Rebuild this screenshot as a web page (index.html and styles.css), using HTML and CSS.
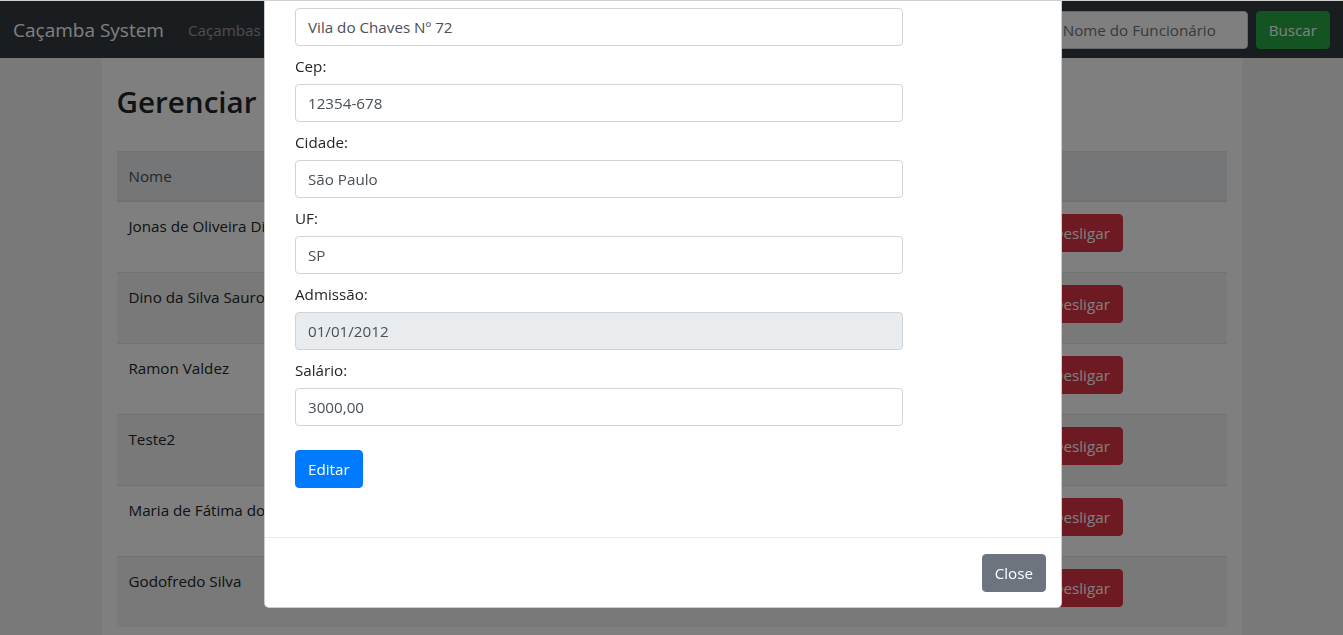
FILE: index.html
```html
<!DOCTYPE html>
<html lang="pt-BR">
<head>
<meta charset="utf-8">
<title>Caçamba System</title>
<link rel="stylesheet" href="styles.css">
</head>
<body>
<div class="topline"></div>
<nav class="navbar">
  <a class="brand" href="#">Caçamba System</a>
  <ul class="nav">
    <li><a href="#">Caçambas</a></li>
    <li><a href="#">Clientes</a></li>
    <li><a href="#">Funcionários</a></li>
  </ul>
  <form class="search">
    <input class="search-input" type="text" placeholder="Nome do Funcionário">
    <button class="btn btn-success" type="button">Buscar</button>
  </form>
</nav>

<main class="container">
  <h2 class="title">Gerenciar Funcionários</h2>
  <table class="table">
    <colgroup>
      <col class="c-nome"><col class="c-cpf"><col class="c-cargo"><col class="c-acoes"><col class="c-extra">
    </colgroup>
    <thead>
      <tr><th>Nome</th><th>CPF</th><th>Cargo</th><th></th><th></th></tr>
    </thead>
    <tbody>
      <tr><td>Jonas de Oliveira Dias</td><td>123.456.789-00</td><td>Motorista</td><td class="actions"><button class="btn btn-danger">Desligar</button></td><td></td></tr>
      <tr><td>Dino da Silva Sauro</td><td>234.567.890-11</td><td>Motorista</td><td class="actions"><button class="btn btn-danger">Desligar</button></td><td></td></tr>
      <tr><td>Ramon Valdez</td><td>345.678.901-22</td><td>Ajudante</td><td class="actions"><button class="btn btn-danger">Desligar</button></td><td></td></tr>
      <tr><td>Teste2</td><td>456.789.012-33</td><td>Ajudante</td><td class="actions"><button class="btn btn-danger">Desligar</button></td><td></td></tr>
      <tr><td>Maria de Fátima dos Santos</td><td>567.890.123-44</td><td>Secretária</td><td class="actions"><button class="btn btn-danger">Desligar</button></td><td></td></tr>
      <tr><td>Godofredo Silva</td><td>678.901.234-55</td><td>Gerente</td><td class="actions"><button class="btn btn-danger">Desligar</button></td><td></td></tr>
    </tbody>
  </table>
</main>

<div class="backdrop"></div>

<div class="modal">
  <div class="modal-body">
    <form class="edit-form">
      <input class="form-control" type="text" value="Vila do Chaves Nº 72">
      <label class="label">Cep:</label>
      <input class="form-control" type="text" value="12354-678">
      <label class="label">Cidade:</label>
      <input class="form-control" type="text" value="São Paulo">
      <label class="label">UF:</label>
      <input class="form-control" type="text" value="SP">
      <label class="label">Admissão:</label>
      <input class="form-control" type="text" value="01/01/2012" disabled>
      <label class="label">Salário:</label>
      <input class="form-control" type="text" value="3000,00">
      <button class="btn btn-primary submit" type="button">Editar</button>
    </form>
  </div>
  <div class="modal-footer">
    <button class="btn btn-secondary" type="button">Close</button>
  </div>
</div>
</body>
</html>
```

FILE: styles.css
```css
* { box-sizing: border-box; }

body {
  margin: 0;
  font-family: "Open Sans", "Noto Sans", "DejaVu Sans", sans-serif;
  font-size: 15.2px;
  line-height: 24px;
  color: #212529;
  background: #f3f3f3;
}

.topline {
  position: fixed;
  top: 0;
  left: 0;
  right: 0;
  height: 1px;
  background: #cfcfcf;
  z-index: 20;
}

/* navbar */
.navbar {
  display: flex;
  align-items: center;
  height: 58px;
  padding: 1px 13px 0 13px;
  background: #343a40;
}
.brand {
  font-size: 19px;
  line-height: 30px;
  color: #fff;
  text-decoration: none;
  margin-right: 16px;
}
.nav {
  display: flex;
  list-style: none;
  margin: 0;
  padding: 0;
}
.nav a {
  display: block;
  padding: 8px;
  color: rgba(255,255,255,.5);
  text-decoration: none;
}
.search {
  margin: 0 0 0 auto;
  display: flex;
  align-items: center;
}
.search-input {
  width: 198px;
  height: 38px;
  padding: 6px 12px;
  margin-right: 8px;
  border: 1px solid #ced4da;
  border-radius: 4px;
  font: inherit;
  color: #495057;
  background: #fff;
}
.search-input::placeholder { color: #6c757d; }

/* buttons */
.btn {
  display: inline-block;
  height: 38px;
  padding: 6px 12px;
  border: 1px solid transparent;
  border-radius: 4px;
  font: inherit;
  line-height: 24px;
  color: #fff;
  cursor: pointer;
}
.btn-success { background: #28a745; border-color: #28a745; }
.btn-primary { background: #007bff; border-color: #007bff; }
.btn-danger { background: #dc3545; border-color: #dc3545; }
.btn-secondary { background: #6c757d; border-color: #6c757d; }

/* page */
.container {
  width: 1140px;
  margin: 0 auto;
  padding: 25px 15px 0;
  background: #fff;
  min-height: calc(100vh - 58px);
}
.title {
  margin: 0 0 30px;
  font-size: 29.6px;
  font-weight: 600;
  line-height: 38px;
}
.table {
  width: 1110px;
  border-collapse: collapse;
  table-layout: fixed;
}
.c-nome { width: 300px; }
.c-cpf { width: 300px; }
.c-cargo { width: 311px; }
.c-acoes { width: 139px; }
.c-extra { width: 60px; }
.table th,
.table td {
  padding: 12px;
  text-align: left;
  vertical-align: top;
  border-top: 1px solid #dee2e6;
  white-space: nowrap;
  overflow: hidden;
}
.table thead th {
  font-weight: 400;
  color: #495057;
  background: #e9ecef;
  border-bottom: 2px solid #dee2e6;
}
.table tbody tr:nth-child(even) { background: rgba(0,0,0,.05); }
.table td.actions { padding-bottom: 20px; }

/* modal */
.backdrop {
  position: fixed;
  inset: 0;
  background: rgba(0,0,0,.5);
}
.modal {
  position: absolute;
  top: 0;
  left: 264px;
  width: 798px;
  background: #fff;
  border: 1px solid rgba(0,0,0,.2);
  border-top: none;
  border-radius: 0 0 5px 5px;
}
.modal-body {
  padding: 8px 0 49px 30px;
}
.edit-form {
  display: flex;
  flex-direction: column;
  align-items: flex-start;
}
.form-control {
  display: block;
  width: 608px;
  height: 38px;
  padding: 6px 12px;
  border: 1px solid #ced4da;
  border-radius: 4px;
  font: inherit;
  color: #495057;
  background: #fff;
}
.form-control:disabled { background: #e9ecef; }
.label {
  display: block;
  margin: 8px 0 6px;
  line-height: 24px;
}
.submit { margin-top: 24px; }
.modal-footer {
  display: flex;
  justify-content: flex-end;
  padding: 16px 15px 15px;
  border-top: 1px solid #e9ecef;
}
```
